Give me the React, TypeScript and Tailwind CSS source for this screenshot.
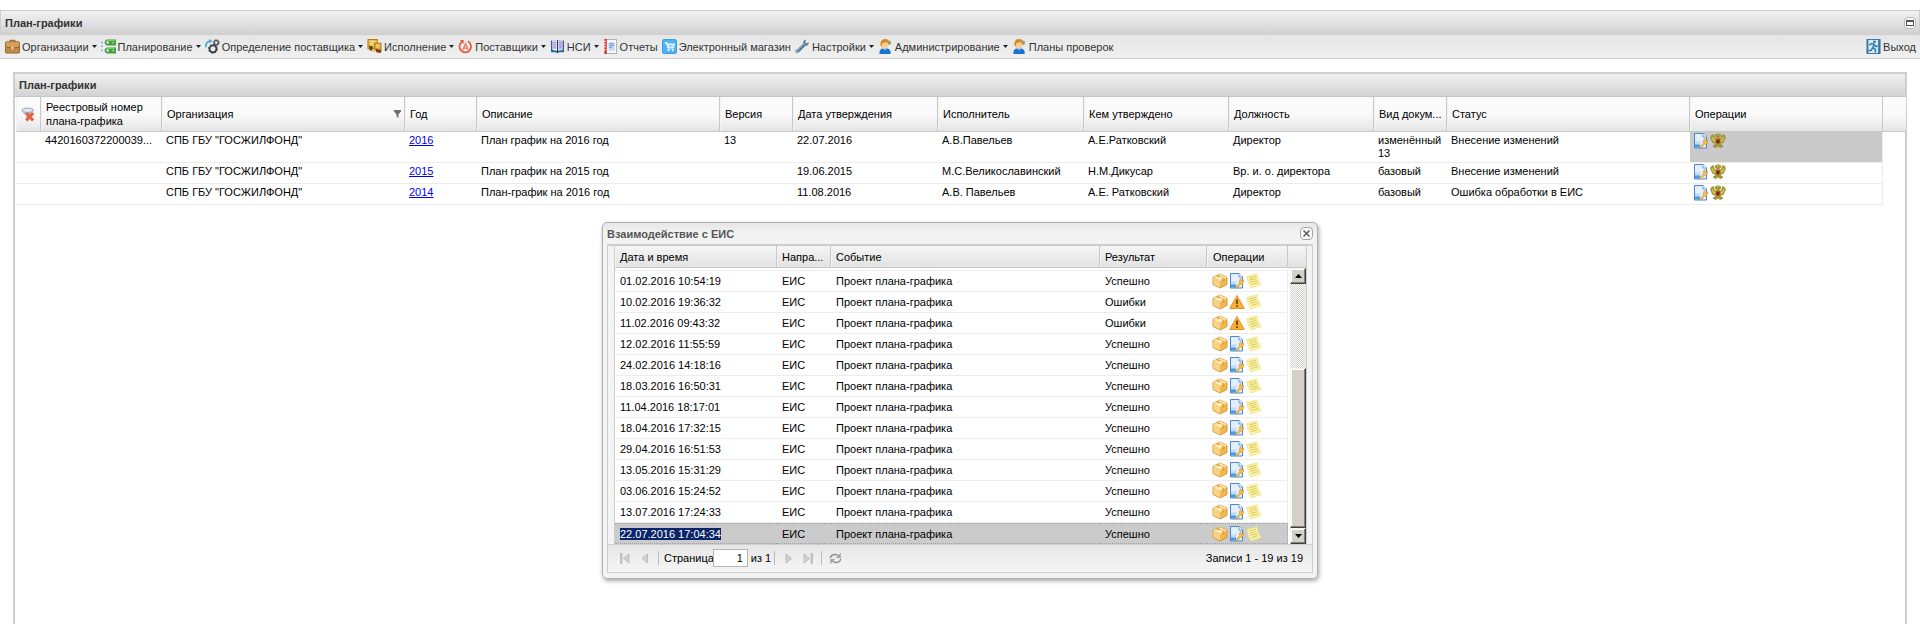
import type { ReactNode } from 'react';

const Svg = ({ children, size = 16 }: { children: ReactNode; size?: number }) => (
  <svg width={size} height={size} viewBox="0 0 16 16" className="block shrink-0" aria-hidden="true">
    {children}
  </svg>
);

const BriefcaseIcon = () => (
  <Svg size={15}>
    <path d="M5.5 3.5V1.5h5v2" fill="none" stroke="#a87632" strokeWidth="1.4" />
    <rect x="0.5" y="3" width="15" height="12" rx="1" fill="#bd8a47" stroke="#99692c" />
    <path d="M1 3.5h14V8q-7 3-14 0z" fill="#d3a15c" />
    <path d="M1 8.5q7 2.5 14 0" stroke="#8f6328" fill="none" />
    <rect x="7" y="8" width="2" height="3" fill="#f0dca8" />
  </Svg>
);

const PlanIcon = () => (
  <Svg size={15}>
    <path d="M6 .5h10V7H6L4 5V2.500zM6 9h10v6.500H6L4 13.500V11z" fill="#43a03a" />
    <path d="M6.500 1.500H15M6.500 10H15" stroke="#8ad06f" />
    <circle cx="7" cy="3.800" r="1.300" fill="#eef" />
    <circle cx="7" cy="12.200" r="1.300" fill="#eef" />
    <path d="M12 4h2M12 12.500h2" stroke="#d7f2ce" />
    <path d="M1 3v1.500M1 7v1.500M1 11.500V13" stroke="#579fe0" strokeWidth="1.500" />
  </Svg>
);

const GearsIcon = () => (
  <Svg size={15}>
    <path d="M1 9Q0 3 6 2" fill="none" stroke="#45a9dd" strokeWidth="1.8" />
    <path d="M4.5 0l3.5 2-3.5 2.5z" fill="#45a9dd" />
    <circle cx="8.5" cy="10.5" r="3.7" fill="none" stroke="#3c3f42" strokeWidth="2" />
    <circle cx="8.5" cy="10.5" r="4.9" fill="none" stroke="#3c3f42" strokeWidth="1" strokeDasharray="1.6 2.2" />
    <circle cx="12" cy="3.8" r="2.3" fill="none" stroke="#54585b" strokeWidth="1.6" />
    <circle cx="12" cy="3.8" r="3.4" fill="none" stroke="#54585b" strokeWidth="0.8" strokeDasharray="1.2 1.5" />
  </Svg>
);

const ExecuteIcon = () => (
  <Svg size={15}>
    <rect x="1" y="0.5" width="10" height="10" fill="#e5b63d" stroke="#b07a16" />
    <path d="M3 2.5h6M3 4.5h6M3 6.5h4" stroke="#fae9a4" />
    <rect x="8" y="4.5" width="7" height="8" fill="#dfa334" stroke="#b07a16" />
    <path d="M9.5 6.5h4M9.5 8.5h4" stroke="#fae9a4" />
    <path d="M2 7l4 1 1 5-4-1z" fill="#5b4420" />
    <path d="M9 10l6 2v3l-5-1z" fill="#7a3a1d" />
    <path d="M6 10l3 2-1 2-3-1z" fill="#efcf6e" />
  </Svg>
);

const SupplierIcon = () => (
  <Svg size={15}>
    <path d="M10.5 2.5A6.2 6.2 0 1 1 4.2 3" fill="none" stroke="#e15a3d" strokeWidth="1.8" />
    <path d="M2 1l4 0v4.2z" fill="#e15a3d" />
    <path d="M5 12l3-7 3 7M6.2 9.7h3.6" fill="none" stroke="#ea7358" strokeWidth="1.3" />
  </Svg>
);

const BookIcon = () => (
  <Svg size={15}>
    <path d="M1 1.5h14V14H9.5L8 15.5 6.5 14H1z" fill="#266c9b" />
    <path d="M2.5 1l5 .8V12.5l-5-.8z" fill="#f4eefb" />
    <path d="M13.5 1l-5 .8V12.5l5-.8z" fill="#e5dcf4" />
    <path d="M3.2 3.5h3.5M3.2 5.5h3.5M3.2 7.5h3.5M3.2 9.5h3.5M9.3 3.5h3.5M9.3 5.5h3.5M9.3 7.5h3.5M9.3 9.5h3.5" stroke="#9370b8" />
    <path d="M8 1.5v13" stroke="#133f68" />
  </Svg>
);

const ReportIcon = () => (
  <Svg size={15}>
    <rect x="2.5" y="0.5" width="12" height="15" fill="#f6f8fb" stroke="#a9acb4" />
    <rect x="1.5" y="0" width="2.500" height="16" fill="#d82d25" />
    <path d="M1 2.5h2M1 5.5h2M1 8.5h2M1 11.5h2" stroke="#fff" />
    <rect x="6" y="3.5" width="6.500" height="9" fill="#c3d8f4" />
    <path d="M6.5 5h5M6.5 7h5M6.5 9h3" stroke="#6d97d3" />
  </Svg>
);

const CartIcon = () => (
  <Svg size={15}>
    <rect x="0.5" y="0.5" width="15" height="15" rx="2" fill="#4db3f4" stroke="#3598dd" />
    <path d="M3 4h2l1.5 5.5h5.5L13 5.5H5.5" fill="none" stroke="#fff" strokeWidth="1.4" />
    <path d="M6 7.5h6.5" stroke="#fff" />
    <circle cx="7" cy="11.8" r="1.2" fill="#fff" />
    <circle cx="11.5" cy="11.8" r="1.2" fill="#fff" />
  </Svg>
);

const WrenchIcon = () => (
  <Svg size={15}>
    <path d="M2.5 13.5L10 6" stroke="#53738f" strokeWidth="3.2" />
    <path d="M14.8 3.5l-2.6 1-1.2-1.2 1-2.6Q8 1 8.6 5.2l2 2.2q4 .5 4.2-3.9z" fill="#6587a3" />
    <path d="M1 11l2 .6.8 2-1 1.9Q-1 15 1 11z" fill="#8ba5ba" />
    <path d="M3 12l7-7" stroke="#b3c8d8" strokeWidth="0.9" />
  </Svg>
);

const UserIcon = () => (
  <Svg size={15}>
    <circle cx="11.500" cy="4" r="2.500" fill="#9c9c9c" />
    <path d="M1.500 16Q1 10 6 10h3q5 0 4.500 6z" fill="#1774d2" />
    <path d="M5.5 9.5h4l-2 3z" fill="#8cc8fa" />
    <ellipse cx="7.300" cy="6" rx="3.600" ry="4.200" fill="#f6cf91" />
    <path d="M2.500 6.500Q2.500 0 7.500 0T11.500 5.500q-1.500-1-2.500-2.500Q6.500 4.500 4.500 4.500L4 8.500z" fill="#d58c1d" />
  </Svg>
);

const ExitIcon = () => (
  <Svg size={15}>
    <rect x="0.500" y="0" width="15" height="16" fill="#2f77a6" />
    <path d="M2.500 1h10.500v14h-10.500z" fill="#d6e8f3" />
    <circle cx="9" cy="3" r="1.500" fill="#2f77a6" />
    <path d="M3.500 6.500L6 4.800l2.600 1-1.400 3.500 2.800 1.700v3.500M7 9.500L5.500 12 2.500 12.500M8.800 6l1.500 2 2.200-.5" fill="none" stroke="#2f77a6" strokeWidth="1.500" />
  </Svg>
);

const FilterOffIcon = () => (
  <Svg size={15}>
    <ellipse cx="7" cy="3.500" rx="6.300" ry="2.300" fill="#dbe6f2" stroke="#8ba0ba" />
    <path d="M1 4.500l4.500 5V14h3V9.500l4.500-5q-6 3-12 0z" fill="#a8b6c8" />
    <path d="M5.500 6.500l7.500 8M13 6.500l-7.500 8" stroke="#e8623c" strokeWidth="3.200" />
  </Svg>
);

const DocEditIcon = () => (
  <Svg>
    <path d="M1.500.500h8.500L13.500 4v11h-12z" fill="#e3effc" stroke="#4b86ca" />
    <path d="M10 .500V4h3.500" fill="#fff" stroke="#4b86ca" strokeWidth="0.800" />
    <path d="M2 8.500h6.500L6 12H2z" fill="#c2dcf7" />
    <rect x="2" y="11.500" width="5" height="3" fill="#4c9ae0" />
    <path d="M7 13.500l3.500-3.700-.2-2.600L12 5.500v2.300h1.500l1-.8v2.800L12.500 11.300h-1L8.500 14.500H7z" fill="#f3c050" stroke="#d2942c" strokeWidth="0.600" />
  </Svg>
);

const EagleIcon = () => (
  <Svg>
    <path d="M8 3.500Q7.500.500 5.500 1.200L5 3.500l1.500.8v2L4.500 5 3.500 1.500Q.500 1.500.500 5l2 4.500 3 1-1.500 3 1.500 1.500L8 13l2.500 2 1.500-1.500-1.500-3 3-1 2-4.500Q15.500 1.500 12.500 1.500L11.500 5l-2 1.300v-2L11 3.500l-.5-2.300Q8.500.500 8 3.500z" fill="#a8982b" stroke="#8a7f30" strokeWidth="0.400" />
    <path d="M2 4l3 4M1.800 6l3 3M14 4l-3 4M14.200 6l-3 3" stroke="#e0d575" strokeWidth="0.900" />
    <path d="M7 1h2" stroke="#c9a72a" strokeWidth="1.500" />
    <path d="M6.300 6.500h3.400v3L8 11 6.300 9.500z" fill="#8d1c16" />
    <path d="M3 13.500l1.500-1M13 13.500l-1.500-1" stroke="#5f5a2c" />
  </Svg>
);

const BoxIcon = () => (
  <Svg>
    <path d="M8 1l7 3.200v7.300L8 15 1 11.500V4.200z" fill="#f0b94f" stroke="#d09336" strokeWidth="0.900" />
    <path d="M8 1l7 3.200L8 8 1 4.200z" fill="#fbe3a6" />
    <path d="M1.400 4.700L8 8v6.600L1.400 11.300z" fill="#f9d284" />
    <path d="M4 2.800l6.500 3.600v2.800l1.800-1V5.500L6 2z" fill="#e6a235" />
    <path d="M5 5.200l3 1.600 3-1.600-3-1.500z" fill="#fff3cf" />
  </Svg>
);

const WarningIcon = () => (
  <Svg>
    <path d="M8 1.500L15.300 14.500H.700z" fill="#fbaf34" stroke="#e8932a" strokeLinejoin="round" />
    <path d="M8 5.500v4.500M8 11.300v1.700" stroke="#5b3a12" strokeWidth="1.600" />
  </Svg>
);

const NoteIcon = () => (
  <Svg>
    <path d="M.800 3.500L11 .800q0 5 4 10.700L4.800 15Q1.500 9 .800 3.500z" fill="#fcf3a4" stroke="#efe08a" strokeWidth="0.800" />
    <path d="M3 5l7-1.800M3.400 7.200l7-1.800M4.200 9.400l7-1.800M5.200 11.600l7-2" stroke="#cfbb55" strokeWidth="0.800" />
  </Svg>
);

const RefreshIcon = () => (
  <Svg size={13}>
    <path d="M1.500 7.500Q3 2.500 8 3l3.500 1.500" fill="none" stroke="#8f8f8f" strokeWidth="1.800" />
    <path d="M14.500 1V7.500H8.500z" fill="#a5a5a5" />
    <path d="M14.500 8.500Q13 13.500 8 13l-3.500-1.500" fill="none" stroke="#8f8f8f" strokeWidth="1.800" />
    <path d="M1.500 15V8.500h6z" fill="#a5a5a5" />
  </Svg>
);

const Caret = () => (
  <svg width="5" height="3" viewBox="0 0 5 3" className="ml-[3px] block shrink-0" aria-hidden="true">
    <path d="M0 0h5L2.500 3z" fill="#222" />
  </svg>
);

const MENU = [
  { label: 'Организации', icon: BriefcaseIcon, menu: true },
  { label: 'Планирование', icon: PlanIcon, menu: true },
  { label: 'Определение поставщика', icon: GearsIcon, menu: true },
  { label: 'Исполнение', icon: ExecuteIcon, menu: true },
  { label: 'Поставщики', icon: SupplierIcon, menu: true },
  { label: 'НСИ', icon: BookIcon, menu: true },
  { label: 'Отчеты', icon: ReportIcon, menu: false },
  { label: 'Электронный магазин', icon: CartIcon, menu: false },
  { label: 'Настройки', icon: WrenchIcon, menu: true },
  { label: 'Администрирование', icon: UserIcon, menu: true },
  { label: 'Планы проверок', icon: UserIcon, menu: false },
];

const PLAN_HEADERS = [
  { title: 'Реестровый номер плана-графика', width: 'w-[121px]' },
  { title: 'Организация', width: 'w-[243px]', filter: true },
  { title: 'Год', width: 'w-[72px]' },
  { title: 'Описание', width: 'w-[243px]' },
  { title: 'Версия', width: 'w-[73px]' },
  { title: 'Дата утверждения', width: 'w-[145px]' },
  { title: 'Исполнитель', width: 'w-[146px]' },
  { title: 'Кем утверждено', width: 'w-[145px]' },
  { title: 'Должность', width: 'w-[145px]' },
  { title: 'Вид докум...', width: 'w-[73px]', nowrap: true },
  { title: 'Статус', width: 'w-[243px]' },
  { title: 'Операции', width: 'w-[193px]' },
];

const PLANS = [
  {
    number: '4420160372200039...', year: '2016', description: 'План график на 2016 год', version: '13', date: '22.07.2016',
    author: 'А.В.Павельев', approver: 'А.Е.Ратковский', post: 'Директор', kind: 'изменённый 13', status: 'Внесение изменений',
  },
  {
    number: '', year: '2015', description: 'План график на 2015 год', version: '', date: '19.06.2015',
    author: 'М.С.Великославинский', approver: 'Н.М.Дикусар', post: 'Вр. и. о. директора', kind: 'базовый', status: 'Внесение изменений',
  },
  {
    number: '', year: '2014', description: 'План-график на 2016 год', version: '', date: '11.08.2016',
    author: 'А.В. Павельев', approver: 'А.Е. Ратковский', post: 'Директор', kind: 'базовый', status: 'Ошибка обработки в ЕИС',
  },
];

const EVENTS = [
  { time: '01.02.2016 10:54:19', ok: true },
  { time: '10.02.2016 19:36:32', ok: false },
  { time: '11.02.2016 09:43:32', ok: false },
  { time: '12.02.2016 11:55:59', ok: true },
  { time: '24.02.2016 14:18:16', ok: true },
  { time: '18.03.2016 16:50:31', ok: true },
  { time: '11.04.2016 18:17:01', ok: true },
  { time: '18.04.2016 17:32:15', ok: true },
  { time: '29.04.2016 16:51:53', ok: true },
  { time: '13.05.2016 15:31:29', ok: true },
  { time: '03.06.2016 15:24:52', ok: true },
  { time: '13.07.2016 17:24:33', ok: true },
  { time: '22.07.2016 17:04:34', ok: true },
];

const HEAD_CELL = 'border-r border-b border-[#c8c8c8] text-left font-normal shadow-[inset_1px_0_0_#f3f3f3]';

const PlanTable = () => (
  <table className="w-full table-fixed border-separate border-spacing-0">
    <thead>
      <tr className="h-[35px] bg-linear-to-b from-[#fafafa] from-50% to-[#e4e4e4]">
        <th className={`w-[25px] pl-[5px] ${HEAD_CELL}`}>
          <button type="button" aria-label="Сбросить фильтр" className="block"><FilterOffIcon /></button>
        </th>
        {PLAN_HEADERS.map((col) => (
          <th key={col.title} className={`${col.width} ${HEAD_CELL} pr-[3px] pl-[5px] leading-[14px]`}>
            <div className={`flex items-center justify-between ${col.nowrap ? 'whitespace-nowrap' : ''}`}>
              <span>{col.title}</span>
              {col.filter && (
                <svg width="7" height="8" viewBox="0 0 7 8" aria-hidden="true">
                  <path d="M0 0h7v1.500L4.500 4.500V8l-2-1.500v-2L0 1.500z" fill="#707070" />
                </svg>
              )}
            </div>
          </th>
        ))}
        <th className="w-[23px] border-b border-[#c8c8c8]" />
      </tr>
    </thead>
    <tbody>
      {PLANS.map((plan, i) => {
        const cell = 'border-b border-[#ededed] px-1 py-[2px] align-top leading-[13px]';
        return (
          <tr key={plan.year} className={i === 0 ? 'h-[31px]' : 'h-[21px]'}>
            <td className={cell} />
            <td className={cell}>{plan.number}</td>
            <td className={cell}>СПБ ГБУ "ГОСЖИЛФОНД"</td>
            <td className={cell}><a href="#" className="text-[#0000ee] underline">{plan.year}</a></td>
            <td className={cell}>{plan.description}</td>
            <td className={cell}>{plan.version}</td>
            <td className={cell}>{plan.date}</td>
            <td className={cell}>{plan.author}</td>
            <td className={cell}>{plan.approver}</td>
            <td className={cell}>{plan.post}</td>
            <td className={cell}>{plan.kind}</td>
            <td className={cell}>{plan.status}</td>
            <td className={`border-r border-b border-[#ededed] px-[3px] py-px align-top ${i === 0 ? 'bg-[#cacaca]' : ''}`}>
              <div className="flex gap-px">
                <button type="button" aria-label="Открыть"><DocEditIcon /></button>
                <button type="button" aria-label="ЕИС"><EagleIcon /></button>
              </div>
            </td>
            <td />
          </tr>
        );
      })}
    </tbody>
  </table>
);

const EventTable = () => (
  <table className="w-[673px] table-fixed border-separate border-spacing-0">
    <thead>
      <tr className="h-[22px] bg-linear-to-b from-[#f5f5f5] to-[#e2e2e2]">
        <th className={`w-[162px] pl-[5px] ${HEAD_CELL}`}>Дата и время</th>
        <th className={`w-[54px] pl-[5px] ${HEAD_CELL}`}>Напра...</th>
        <th className={`w-[269px] pl-[5px] ${HEAD_CELL}`}>Событие</th>
        <th className={`w-[107px] pl-[5px] ${HEAD_CELL}`}>Результат</th>
        <th className={`w-[81px] pl-[6px] ${HEAD_CELL}`}>Операции</th>
      </tr>
    </thead>
    <tbody>
      <tr className="h-[3px]">
        <td colSpan={5} className="border-b border-[#ededed]" />
      </tr>
      {EVENTS.map((event, i) => {
        const selected = i === EVENTS.length - 1;
        const cell = selected
          ? 'border-y border-dotted border-[#a0a0a0] bg-[#cbcbcb] px-[5px]'
          : 'border-b border-[#ededed] px-[5px]';
        return (
          <tr key={event.time} className="h-[21px]">
            <td className={cell}>
              <span className={selected ? 'bg-[#0a246a] text-white' : ''}>{event.time}</span>
            </td>
            <td className={cell}>ЕИС</td>
            <td className={cell}>Проект плана-графика</td>
            <td className={cell}>{event.ok ? 'Успешно' : 'Ошибки'}</td>
            <td className={`${cell} border-r`}>
              <div className="flex gap-px">
                <button type="button" aria-label="Пакет"><BoxIcon /></button>
                <button type="button" aria-label={event.ok ? 'Документ' : 'Ошибки'}>
                  {event.ok ? <DocEditIcon /> : <WarningIcon />}
                </button>
                <button type="button" aria-label="Протокол"><NoteIcon /></button>
              </div>
            </td>
          </tr>
        );
      })}
    </tbody>
  </table>
);

const BEVEL = 'border border-t-[#f5f3ef] border-r-[#404040] border-b-[#404040] border-l-[#f5f3ef] bg-[#d4d0c8] shadow-[inset_-1px_-1px_0_#808080,inset_1px_1px_0_#fff]';

const ScrollBar = () => (
  <div className="ml-[2px] flex flex-1 flex-col bg-[repeating-conic-gradient(#d4d0c8_0_25%,#fff_0_50%)] bg-[length:2px_2px]">
    <button type="button" aria-label="Вверх" className={`flex h-4 items-center justify-center ${BEVEL}`}>
      <svg width="7" height="4" viewBox="0 0 7 4"><path d="M3.500 0L7 4H0z" /></svg>
    </button>
    <div className="h-[84px]" />
    <div className={`flex-1 ${BEVEL}`} />
    <button type="button" aria-label="Вниз" className={`flex h-4 items-center justify-center ${BEVEL}`}>
      <svg width="7" height="4" viewBox="0 0 7 4"><path d="M0 0h7L3.500 4z" /></svg>
    </button>
  </div>
);

const PageButton = ({ label, d, className }: { label: string; d: string; className: string }) => (
  <button type="button" aria-label={label} className={className}>
    <svg width="10" height="11" viewBox="0 0 10 11" className="block">
      <path d={d} fill="#cfcfcf" stroke="#b5b5b5" strokeWidth="0.800" />
    </svg>
  </button>
);

const Divider = ({ className }: { className: string }) => (
  <span className={`h-3.5 w-px bg-[#bcbcbc] ${className}`} />
);

const ExchangeDialog = () => (
  <section
    role="dialog"
    aria-label="Взаимодействие с ЕИС"
    className="absolute top-[222px] left-1/2 w-[716px] -translate-x-1/2 rounded-[5px] border border-[#b0b0b0] bg-linear-to-b from-[#e6e6e6] to-[#f3f3f3] to-3% px-1 pb-[5px] shadow-[1px_2px_4px_rgba(0,0,0,0.35)]"
  >
    <header className="flex h-[21px] items-center justify-between">
      <h2 className="font-bold text-[#555]">Взаимодействие с ЕИС</h2>
      <button type="button" aria-label="Закрыть" className="flex size-[13px] items-center justify-center rounded-sm border border-[#a5a5a5] bg-[#f8f8f8]">
        <svg width="7" height="7" viewBox="0 0 7 7"><path d="M.500.500l6 6M6.500.500l-6 6" stroke="#555" strokeWidth="1.400" /></svg>
      </button>
    </header>
    <div className="border border-t-2 border-[#cdcdcd] pr-[5px] pl-[6px]">
      <div className="border-x border-[#cdcdcd] bg-white">
        <div className="flex">
          <EventTable />
          <div className="flex flex-1 flex-col">
            <div className="h-[22px] border-b border-[#c8c8c8] bg-linear-to-b from-[#f5f5f5] to-[#e2e2e2]" />
            <ScrollBar />
          </div>
        </div>
      </div>
      <footer className="-mr-[5px] -ml-[6px] flex h-[28px] items-center border-t border-[#cdcdcd] bg-linear-to-b from-[#e6e6e6] to-[#f6f6f6] pr-[9px] pb-px pl-3">
        <PageButton label="Первая" className="" d="M.500.500h1.500v10H.500zM9 1v9L3.500 5.500z" />
        <PageButton label="Предыдущая" className="ml-2.5" d="M7.500 1v9L2 5.500z" />
        <Divider className="ml-2" />
        <label htmlFor="page" className="ml-[5px]">Страница</label>
        <input id="page" type="text" defaultValue="1" className="-ml-px h-[18px] w-[35px] border border-[#b5b5b5] bg-white pr-1 text-right" />
        <span className="ml-[3px]">из 1</span>
        <Divider className="ml-[3px]" />
        <PageButton label="Следующая" className="ml-2.5" d="M1 1v9L6.500 5.500z" />
        <PageButton label="Последняя" className="ml-2" d="M1 1v9L6.500 5.500zM8 .500h1.500v10H8z" />
        <Divider className="ml-2" />
        <button type="button" aria-label="Обновить" className="ml-[7px]"><RefreshIcon /></button>
        <span className="ml-auto">Записи 1 - 19 из 19</span>
      </footer>
    </div>
  </section>
);

const App = () => (
  <div className="relative flex h-screen flex-col overflow-hidden bg-white pt-2.5 font-['Liberation_Sans',Arial,sans-serif] text-[11px] leading-[14px] text-black">
    <header className="flex h-[25px] shrink-0 items-center justify-between border border-[#cfcfcf] bg-linear-to-b from-[#f1f1f1] to-[#d1d1d1] pr-[3px] pl-1">
      <h1 className="font-bold text-[#333]">План-графики</h1>
      <button type="button" aria-label="Развернуть" className="flex size-3 items-center justify-center rounded-sm border border-[#bbb] bg-[#f8f8f8]">
        <span className="block h-[6px] w-2 border border-t-2 border-[#555]" />
      </button>
    </header>
    <nav className="flex h-6 shrink-0 items-center border-b border-[#cfcfcf] bg-linear-to-b from-[#e6e6e6] to-[#f0f0f0] pr-1 pl-[5px] text-[#333]">
      <div className="flex gap-1">
        {MENU.map((item) => (
          <button key={item.label} type="button" className="flex items-center whitespace-nowrap">
            <item.icon />
            <span className="ml-[2px]">{item.label}</span>
            {item.menu && <Caret />}
          </button>
        ))}
      </div>
      <button type="button" className="ml-auto flex items-center gap-[2px]">
        <ExitIcon />
        Выход
      </button>
    </nav>
    <main className="mx-[13px] mt-[13px] flex flex-1 flex-col border-x-2 border-t-2 border-[#cfcfcf] pl-px">
      <h2 className="-ml-px flex h-[23px] shrink-0 items-center border-b border-[#c6c6c6] bg-linear-to-b from-[#f1f1f1] to-[#d3d3d3] pl-1 font-bold text-[#333]">
        План-графики
      </h2>
      <PlanTable />
    </main>
    <ExchangeDialog />
  </div>
);

export default App;
